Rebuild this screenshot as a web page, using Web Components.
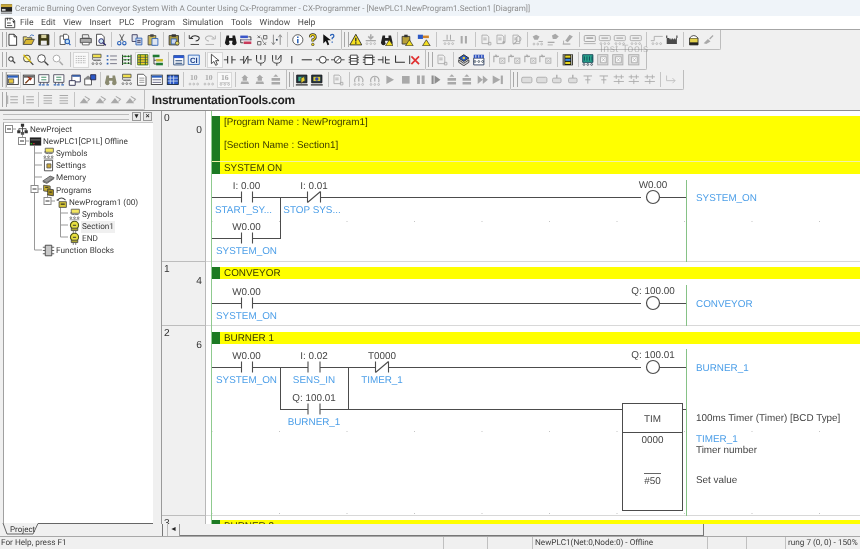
<!DOCTYPE html>
<html><head><meta charset="utf-8"><style>
html,body{margin:0;padding:0;width:860px;height:549px;overflow:hidden;background:#f0f0f0}
app-shell{display:flex;flex-direction:column;width:860px;height:549px;position:relative;filter:blur(.3px);text-rendering:geometricPrecision}
</style></head><body>
<app-shell>
<title-bar>Ceramic Burning Oven Conveyor System With A Counter Using Cx-Programmer - CX-Programmer - [NewPLC1.NewProgram1.Section1 [Diagram]]</title-bar>
<menu-bar items="File,Edit,View,Insert,PLC,Program,Simulation,Tools,Window,Help"></menu-bar>
<tool-row first>
 <tool-bar pad="5.3" end="4.6" items="new open save | cfind | print preview | cut copy paste | ppaste | undo redo | binoc repl gears arrows | info q helpq"></tool-bar>
 <tool-bar pad="6.3" end="4" items="warn gman binw |4.8 lockw +2 colw |9 grung gbars |6.2 gdoc gdocm gdocq |5.8 gp1 gp2 gp3 |5.8 gchip gchipd gchipd gchipd |5.4 gstep gfact |6.2 lock gplug"></tool-bar>
</tool-row>
<tool-row>
 <tool-bar pad="4.3" end="2" items="mag magx magp magg |7.4 grid* symb list io table* tree |5.6 chart ci |5.2 arrow* no nc onc onc2 vert hline coil coiln fb fb2 tee ell xred"></tool-bar>
 <tool-bar pad="8.3" end="5" items="gdoc |6.6 bchip bio |5.2 gsq gsq gsq gsq |6.4 film |4.6 teal gbox gbox gbox"></tool-bar>
</tool-row>
<tool-row>
 <tool-bar pad="5.3" end="3" items="win* ham ldg ldg win2 home |5.6 binocs symb doc2 win3 win4 |6 n10 n10 n16* |4.8 garrow garrow gstack"></tool-bar>
 <tool-bar pad="6.3" end="5" items="online online2 |6.2 gdoc |5.6 gcirc gcirc play stop pause stepb gstack gstack fwd endb"></tool-bar>
 <tool-bar pad="7.3" end="4.6" items="gpill gpill gpin gpin gt gt gtt gtt gtt |5.4 gret"></tool-bar>
</tool-row>
<tool-row last>
 <tool-bar pad="5.3" end="5" items="gind gind |4.2 glist glist |6.2 gkey gkey gkey gkey"></tool-bar>
 <brand-text>InstrumentationTools.com</brand-text>
</tool-row>
<water-mark>Inst Tools</water-mark>
<work-area>
 <project-pane slot="side"></project-pane>
 <ladder-view slot="main">
  <l-rung no="0" step="0" top="111" h="151" dots="28">
   <l-band y="116" h="58" split="161"><l-note y="123">[Program Name : NewProgram1]</l-note><l-note y="146">[Section Name : Section1]</l-note><l-note y="168.500">SYSTEM ON</l-note></l-band>
   <l-wire x1="212" y1="197" x2="641" y2="197"></l-wire><l-wire x1="212" y1="238" x2="280" y2="238"></l-wire><l-wire x1="280" y1="197" x2="280" y2="238"></l-wire><l-wire x1="660" y1="197" x2="686" y2="197"></l-wire>
   <l-wire x1="686" y1="180" x2="686" y2="261" green></l-wire>
   <l-contact cx="246.5" y="197" nx="-3" addr="I: 0.00" name="START_SY..."></l-contact>
   <l-contact cx="314" y="197" nc nx="-2" addr="I: 0.01" name="STOP SYS..."></l-contact>
   <l-contact cx="246.5" y="238" addr="W0.00" name="SYSTEM_ON"></l-contact>
   <l-coil cx="653" y="197" addr="W0.00" name="SYSTEM_ON"></l-coil>
  </l-rung>
  <l-rung no="1" step="4" top="262" h="64" dots="23">
   <l-band y="267" h="12"><l-note y="274">CONVEYOR</l-note></l-band>
   <l-wire x1="212" y1="303" x2="641" y2="303"></l-wire><l-wire x1="660" y1="303" x2="686" y2="303"></l-wire>
   <l-wire x1="686" y1="285" x2="686" y2="325" green></l-wire>
   <l-contact cx="246.5" y="303" addr="W0.00" name="SYSTEM_ON"></l-contact>
   <l-coil cx="653" y="303" addr="Q: 100.00" name="CONVEYOR"></l-coil>
  </l-rung>
  <l-rung no="2" step="6" top="326" h="190" dots="23">
   <l-band y="332" h="12"><l-note y="339">BURNER 1</l-note></l-band>
   <l-wire x1="212" y1="367" x2="641" y2="367"></l-wire><l-wire x1="660" y1="367" x2="686" y2="367"></l-wire>
   <l-wire x1="280" y1="367" x2="280" y2="409"></l-wire><l-wire x1="348" y1="367" x2="348" y2="409"></l-wire><l-wire x1="280" y1="409" x2="622" y2="409"></l-wire><l-wire x1="682" y1="409" x2="686" y2="409"></l-wire>
   <l-wire x1="686" y1="349" x2="686" y2="515" green></l-wire>
   <l-contact cx="246.5" y="367" addr="W0.00" name="SYSTEM_ON"></l-contact>
   <l-contact cx="314" y="367" addr="I: 0.02" name="SENS_IN"></l-contact>
   <l-contact cx="382" y="367" nc addr="T0000" name="TIMER_1"></l-contact>
   <l-contact cx="314" y="409" addr="Q: 100.01" name="BURNER_1"></l-contact>
   <l-coil cx="653" y="367" addr="Q: 100.01" name="BURNER_1"></l-coil>
   <l-timer x="622" y="403" w="61" h="108" op="TIM" num="0000" set="#50"></l-timer>
   <l-text x="696" y="419">100ms Timer (Timer) [BCD Type]</l-text>
   <l-text x="696" y="440" blue>TIMER_1</l-text>
   <l-text x="696" y="451">Timer number</l-text>
   <l-text x="696" y="481">Set value</l-text>
  </l-rung>
  <l-rung no="3" step="" top="516" h="30" dots="23">
   <l-band y="520" h="12"><l-note y="526.500">BURNER 2</l-note></l-band>
  </l-rung>
  <h-scroll></h-scroll>
 </ladder-view>
</work-area>
<status-bar></status-bar>
</app-shell>
<script>
const G='#a9a9a9',K='#2e2e2e',B='#2a62b8';
const ln=(d,c=K,w=1)=>`<path d="${d}" fill="none" stroke="${c}" stroke-width="${w}"/>`;
const fl=(d,f,c='none')=>`<path d="${d}" fill="${f}" stroke="${c}"/>`;
const ooo=(c,y=14)=>[3.5,8,12.5].map(x=>`<circle cx="${x}" cy="${y}" r="1.1" fill="none" stroke="${c}" stroke-width=".8"/>`).join('');
const tri=`<path d="M8 1.5L15 14H1z" fill="#f5e020" stroke="#222"/>`+ln('M8 5.5v4.5',K,1.6)+ln('M8 11v1.6',K,1.6);
const miniw=`<path d="M11 8l4.5 7h-9z" fill="#f5e020" stroke="#222" stroke-width=".8"/>`;
const binoc=c=>fl('M3 3h3v3h4V3h3l2 9h-5V9H6v3H1z',c)+`<circle cx="4" cy="12" r="2.4" fill="${c}"/><circle cx="12" cy="12" r="2.4" fill="${c}"/>`;
const ldoc=(c=G)=>fl('M3.5 2.5h6l2 2v8h-8z','none',c)+ln('M5 6h4M5 8h4',c);
const win=(t,f='#fff')=>`<rect x="1.5" y="2.5" width="13" height="11" fill="${f}" stroke="#333"/><rect x="2" y="3" width="12" height="2.5" fill="${t}"/>`;
const I={
new:fl('M3.5 1.5h6l3 3v10h-9z','#fff','#222')+ln('M9.5 1.5v3h3','#222'),
open:fl('M1.5 13.5V4.5h4l1 1h5v2','#ecd868','#444')+fl('M1.5 13.5l3-6h10l-3 6z','#d9b732','#444')+ln('M9 4q2-3 5-1',B),
save:fl('M2 2h12v12H2z','#3d3a12','#222')+fl('M5 2h6v4H5z','#d8d2a0')+fl('M4.5 9h7v5h-7z','#eee'),
cfind:fl('M2.5 3.5h4l2 2v8h-6z','#fff','#444')+fl('M6.5 1.5h4l2 2v4h-6z','#fff','#444')+`<circle cx="11" cy="10" r="2.6" fill="#bfe0f7" stroke="${B}" stroke-width="1.2"/>`+ln('M12.6 12l2 2.4',B,1.4),
print:fl('M4 2h7l1 4H4z','#eee','#555')+fl('M1.5 6.5h13v5h-13z','#aaa','#444')+fl('M4 11h8v3H4z','#fff','#555'),
preview:fl('M3 1.5h6l3 3v10H3z','#fff','#333')+`<circle cx="8.5" cy="9.5" r="2.8" fill="#cfe8f5" stroke="#226" stroke-width="1.1"/>`+ln('M10.5 11.5l3.5 3','#226',1.4),
cut:ln('M5.5 1.5l4 8M10.5 1.5l-4 8','#444',1)+`<circle cx="5" cy="12" r="2" fill="none" stroke="${B}" stroke-width="1.3"/><circle cx="11" cy="12" r="2" fill="none" stroke="${B}" stroke-width="1.3"/>`,
copy:fl('M2.5 2h6v8h-6z','#dfe3ee','#335')+fl('M7 6h7v8H7z','#c2cde2',B)+ln('M8.5 9h4M8.5 11h4','#335'),
paste:fl('M2.5 3h9v11h-9z','#c9b65a','#444')+fl('M5 1.5h4v3H5z','#444')+fl('M7 6.5h7v8H7z','#dfe6f2',B),
ppaste:fl('M2.5 3h11v11h-11z','#a7963f','#333')+fl('M5.5 1.5h5v3h-5z','#333')+fl('M5 7h6v6H5z','#c9d6ee',B)+`<circle cx="12" cy="12" r="2.2" fill="#e3d860" stroke="#333" stroke-width=".8"/>`,
undo:ln('M3 6q3-3.500 7-2.500t3 3.500q-1 2.500-4 2.500',K,1.200)+ln('M1.500 2.500v4h4.500',K,1.100)+ln('M3 13.500h10',K,1),
redo:ln('M13 6q-3-3.500-7-2.500t-3 3.500q1 2.500 4 2.500',G,1.100)+ln('M14.500 3v4H10',G,1)+ln('M3 13.500h10',G,1),
binoc:binoc('#1b1b1b'),
binocs:binoc('#8a8a70'),
repl:fl('M1.500 3h9v3h-9z','#3a56c8')+fl('M5.500 10h9v3h-9z','#c83a5a')+ln('M11 4.500h3v4M5 11.500H2v-4',K,1)+ln('M1.500 8h13','#336',.8),
gears:ln('M3 3l3 3m-3 0l3-3M10 3h4v4h-4zM3 10h4v4H3zM10 11l3 3m-3 0l3-3',"#666",1.100)+ln('M7 5l3 6','#888',1),
arrows:ln('M4 2v11M2 11l2 3 2-3M12 14V3M10 5l2-3 2 3',"#888",1.100)+ln('M7 8h2','#345',2),
info:`<circle cx="8" cy="8" r="6" fill="#fff" stroke="#444"/>`+ln('M8 7v5',B,1.800)+ln('M8 4v1.800',B,1.800),
q:ln('M5 5q0-3 3-3t3 3q0 2-3 3v2',K,3.200)+ln('M5 5q0-3 3-3t3 3q0 2-3 3v2','#f2d820',1.500)+`<circle cx="8" cy="13.500" r="1.500" fill="#f2d820" stroke="#222" stroke-width=".7"/>`,
helpq:fl('M1.500 1.500v11l3-3 2 5 2-1-2-5h4z','#111')+ln('M10 3.500q0-2 2-2t2 2q0 1.500-2 2.500v1.500',B,1.500)+ln('M12 10v1.500',B,1.500),
warn:tri,
gman:ln('M8 1.500v5M5 4l3 3 3-3',G,1.800)+ln('M2 9h12',G,1.500)+ooo(G,12.5),
binw:binoc('#222')+miniw,
lockw:fl('M2.500 4h9v9h-9z','#b79f38','#333')+fl('M5 2h4v3H5z','#333')+miniw,
colw:fl('M1 2h6v5H1z','#2d58c4')+fl('M7 3h7v3H7z','#d08428')+miniw,
grung:ln('M6 2v6M10 2v6',G,1.200)+ln('M1 9h14',G)+ooo(G,12.5),
gbars:ln('M5.500 3.500v9M10.500 3.500v9',G,2.400),
gdoc:ldoc()+ln('M11 11h3v3h-3z',G),
gdocm:ldoc()+ln('M13 2v9',G)+`<circle cx="11.500" cy="11" r="1.500" fill="${G}"/>`,
gdocq:ldoc()+`<circle cx="10" cy="7" r="3" fill="none" stroke="${G}"/>`+ln('M8 9.500l-4 4',G,1.300),
gp1:fl('M2 4l4-2 4 2-2 4H4z',G)+ln('M9 10h5',G)+ooo(G,13),
gp2:fl('M7 3l4-2 4 3-3 3H8z',G)+ln('M2 11h8',G,1.500)+ln('M2 14h6',G),
gp3:fl('M10 2l4 2-6 7-3-2z',G)+ln('M2 13h9',G,1.400)+ln('M3 9v4',G),
gchip:`<rect x="1.500" y="3" width="13" height="7" rx="1" fill="none" stroke="#9c9c9c"/>`+ln('M4 6h8',G,2)+ln('M1 12.500h14',G),
gchipd:`<rect x="1.500" y="3" width="13" height="6" rx="1" fill="none" stroke="${G}"/>`+ln('M4 6h8',G,1.500)+ooo(G,12.500),
gstep:ln('M1 9h4V4h10',G,1)+ooo(G,12.500),
gfact:fl('M2 6v7h12V6h-1l-1 2-1-2-1 2-1-2-1 2-1-2-1 2-1-2z','#4a4a4a')+ln('M2 3v3M14 3v3','#555',1.500),
lock:fl('M3 6h10v8H3z','#e2d04c','#333')+fl('M3 6q5-6 10 0','#fff','#333')+fl('M3 11h10v3H3z','#222'),
gplug:fl('M2 12l5-5 3 3-5 3z',G)+ln('M9 7l4-4',G,1.500),
mag:`<circle cx="7" cy="7" r="2.600" fill="#fff" stroke="#444" stroke-width="1.200"/>`+ln('M9 9l3 3','#444',1.500),
magx:`<circle cx="7" cy="6.500" r="4" fill="#fff9c0" stroke="#444" stroke-width="1.100"/>`+ln('M10 9.500l4.500 4.500','#444',1.500)+ln('M3 2l9 9',"#d7b800",1.500),
magp:`<circle cx="6.500" cy="6.500" r="4.500" fill="#fff" stroke="#444" stroke-width="1.100"/>`+ln('M10 10l4.500 4.500','#444',1.600),
magg:`<circle cx="6.500" cy="6.500" r="4" fill="#fff" stroke="${G}" stroke-width="1.100"/>`+ln('M10 10l4 4',G,1.700),
grid:ln('M2 4h12M2 6.500h12M2 9h12M2 11.500h12','#999',.8)+ln('M4 3v10M7 3v10M10 3v10M13 3v10','#f9f9f9',1),
symb:fl('M3 1.500h10v4H3z','#f0e050','#555')+ln('M3 5.500q-2 5 10 3','#666')+ooo('#555',12.500)+ln('M4 8h8','#666',.7),
list:ln('M6 3.500h8M6 8h8M6 12.500h8','#667',1)+ln('M2 3.500h2M2 8h2M2 12.500h2',B,1.800),
io:ln('M3 2v12M13 2v12',K,1.200)+ln('M3 4h10M3 8h10M3 12h10','#4a4',1.300)+ln('M6 3v2M10 3v2M6 7v2M10 7v2M6 11v2M10 11v2',K,1.200),
table:fl('M2 2h12v12H2z','#f0d820','#2a6020')+ln('M2 5h12M2 8h12M2 11h12','#446',.9)+ln('M5 2v12M11 2v12','#2a6020',1.100),
tree:fl('M2 2h8v3H2z','#1f7a32')+fl('M6 7h8v3H6z','#c8b828')+fl('M6 11.500h8v3H6z','#1f7a32')+ln('M3.500 5v8h2.500M3.500 8.500h2.500','#333'),
chart:fl('M2 3h12v11H2z','#fff','#247')+fl('M2 3h12v3H2z','#2b58d0')+ln('M4 9h8M4 12h8','#247',1.200),
ci:fl('M1.500 2.500h13v11h-13z','#e2eefc',B)+`<text x="8" y="11.500" text-anchor="middle" font-family="Liberation Sans" font-weight="700" font-size="9" fill="#1a3b86">CI</text>`,
arrow:fl('M4 1.500v11l3-2.500 2 4.500 2-1-2-4.500h4z','#fff','#333'),
no:ln('M1 8h4.500M10.500 8H15',K)+ln('M5.500 3.500v9M10.500 3.500v9',K,1.200),
nc:ln('M1 8h4.500M10.500 8H15',K)+ln('M5.500 3.500v9M10.500 3.500L5.500 12.500M10.500 3.500v9',K,1.100),
onc:ln('M3 2.500v5.500M8 2.500v5.500M13 2.500v5.500',K,1.200)+ln('M3 8q0 4 5 4t5-4M8 12v3',K,1),
onc2:ln('M3 2.500v5.500M7 2.500v5.500M13 2.500L9 8M13 2.500v5.500',K,1.100)+ln('M3 8q0 4 5 4t5-4M8 12v3',K,1),
vert:ln('M8 3.500v9',K,1.200),
hline:ln('M2 8h12',K,1.200),
coil:ln('M0 8h4M12 8h4',K)+`<circle cx="8" cy="8" r="4" fill="#fff" stroke="${K}" stroke-width="1.100"/>`,
coiln:ln('M0 8h4M12 8h4',K)+`<circle cx="8" cy="8" r="4" fill="#fff" stroke="${K}" stroke-width="1.100"/>`+ln('M5 11l6-6',K),
fb:fl('M4 2.500h8v11H4z','#fff',K)+ln('M2 5h2M12 5h2M2 8h2M12 8h2M2 11h2M12 11h2M4 6.500h8M4 9.500h8',K),
fb2:fl('M3.500 2.500h9v11h-9z','#fff',K)+ln('M1 5h2.500M12.500 5H15M1 8h2.500M12.500 8H15M1 11h2.500M12.500 11H15',K)+ln('M3.500 5.500h9',K,1.500),
tee:ln('M1 8h6M7 4v8M10 4v8M10 8h5M10 12h5',K,1.100),
ell:ln('M3 3v8h11',K,1.200),
xred:ln('M2 3v10',K,1.100)+ln('M4 4l9 9M13 4l-9 9','#e03030',2),
bchip:fl('M2 6l6-4 6 4-6 4z','#2a58c0','#222')+fl('M2 8l6 4 6-4v3l-6 4-6-4z','#cfcfcf','#333')+`<circle cx="8" cy="6" r="1.500" fill="#e8d040"/>`,
bio:fl('M2 6h12v8H2z','#fff','#235')+fl('M2 2h12v4H2z','#2b4fbc')+ln('M4.500 2.500v3M8 2.500v3M11.500 2.500v3','#fff',1)+ooo('#234',10),
gsq:ln('M1 11V4h6',G,1.300)+`<rect x="8" y="6" width="6" height="6" fill="#eee" stroke="${G}"/>`+ln('M9.500 7.500l3 3M12.500 7.500l-3 3',G,.8)+ln('M3 2l2 3',G,1.500),
film:fl('M2 1.500h12v13H2z','#1b1b10')+fl('M5 3h6v2.500H5z','#e8d820')+fl('M5 6.800h6v2.500H5z','#3a8ae0')+fl('M5 10.500h6v2.500H5z','#e8d820')+ln('M3.500 2v12M12.500 2v12','#eee',.9),
teal:fl('M2 2h12v9H2z','#29a58e','#0b3a4c')+ln('M4 4v5M7 4v5M10 4v5M13 4v5','#0b3a4c',.9)+ooo('#234',13.500),
gbox:`<rect x="2" y="2" width="12" height="12" fill="#ddd" stroke="#aaa"/>`+`<rect x="5.500" y="4.500" width="6.500" height="7" fill="#fff" stroke="${G}"/>`+ln('M7 6l3.500 4M10.500 6L7 10',G,.8),
win:win('#2a60c0')+fl('M3 7h6v5H3z','#e8c840','#555'),
ham:win('#666')+ln('M4 12L10 6',"#7a3a10",1.500)+fl('M6 4l6 2-2 3z','#a83018'),
ldg:fl('M2 2h12v9H2z','#fff','#445')+ln('M5 5h6M5 8h6','#3a8a60',1.100)+ln('M2 14h3M6 14h3M11 14h3',B,1.400)+ln('M4 11v2M8 11v2M12 11v2','#445'),
win2:fl('M4.500 2.500h10v8h-10z','#fff','#224')+fl('M1.500 9h7v5.500h-7z','#fff','#224')+ln('M5 3.500h9','#2350a0',1.800),
home:fl('M2 7h8v7H2z','#fff','#444')+fl('M1 7l5-4 5 4z','#888')+fl('M9 2h6v6H9z','#2b58c8','#224'),
doc2:fl('M3 1.500h7l3 3v10H3z','#fff','#444')+ln('M5 6h6M5 8.500h6M5 11h6','#888'),
win3:win('#2a60c0')+ln('M3 8h10','#557',1)+ln('M3 11h10','#557',1),
win4:`<rect x="1.500" y="2.500" width="13" height="11" fill="#2b58c8" stroke="#123"/>`+ln('M5 3v10M9 3v10M2 6h12M2 9.500h12','#cde',1),
n10:`<text x="8" y="8.500" text-anchor="middle" font-family="Liberation Serif" font-size="9" fill="#aaa">10</text>`+ooo(G,13),
n16:`<text x="8" y="8.500" text-anchor="middle" font-family="Liberation Serif" font-size="9" fill="#aaa">16</text>`+ln('M2 11.500h12',G,.8)+ooo(G,13.500),
garrow:fl('M8 2l4 4h-1.500v3h-5V6H4z',G)+fl('M4 10h8l1 3H3z',G),
gstack:fl('M8 1.500l3 3H5z',G)+fl('M3 6h10v3H3zM3 10.500h10v3H3z',G),
online:fl('M2 2.500h12v9H2z','#234','#111')+fl('M4 4.500h8v5H4z','#3eb08a')+fl('M7 6l4-2 1 5-5 3z','#e8d030','#333')+ln('M1 14h14','#222',1.400),
online2:fl('M2 2.500h12v9H2z','#234','#111')+fl('M4 4.500h8v5H4z','#d8c838')+`<circle cx="8" cy="7" r="2" fill="#34a"/>`+ln('M1 14h14','#222',1.400),
gcirc:ln('M3.500 11a5 5 0 1 1 9 0',G,1.400)+ln('M8 5v5',G,1.400)+ooo(G,13.500),
play:fl('M4 3l9 5-9 5z',G),
stop:fl('M3.500 3.500h9v9h-9z',G),
pause:fl('M3.500 3h3.500v10H3.500zM9 3h3.500v10H9z',G),
stepb:fl('M3 3h2.500v10H3zM6.500 3l7 5-7 5z','#8e8e8e'),
fwd:fl('M2 3l6 5-6 5zM8 3l6 5-6 5z',G),
endb:fl('M2 3l9 5-9 5z',G)+fl('M11.500 3h2.500v10h-2.500z',G),
gpill:`<rect x="2" y="5" width="12" height="6.500" rx="1.500" fill="#ddd" stroke="${G}"/>`,
gpin:`<rect x="3" y="6" width="10" height="5.500" rx="1.500" fill="#ddd" stroke="${G}"/>`+ln('M8 2v4',G,1.500),
gt:ln('M3 3.500h10M8 3.500v9M5 8h6',G,1.100),
gtt:ln('M2 4.500h12M5 2v5M11 2v5M2 10h12M8 7v6',G,1),
gret:ln('M3 3v6h10M10 6l3 3-3 3',"#c0c0c0",1.100),
gind:ln('M2 3v10M5 4.500h9M5 8h9M5 11.500h9',G,1.200),
glist:ln('M3 3h10M3 6h10M3 9h10M3 12h10',G,1.200),
gkey:fl('M2 12l5-6 5 6z',G)+ln('M8 4l5 3M11 10l3-3',G,1.200)
};
function shadow(el,html){const r=el.attachShadow({mode:'open'});r.innerHTML=html;return r}
const def=(n,c)=>customElements.define(n,c);
def('app-shell',class extends HTMLElement{});
const UI='Roboto,"Noto Sans",sans-serif';
const AR='"Liberation Sans",Arial,sans-serif';
const WIRE='#4c4c4c';
def('title-bar',class extends HTMLElement{constructor(){super();shadow(this,`<style>:host{display:flex;align-items:center;height:16px;background:#eff4f9;color:#8d8d8d;font:8.100px/17px ${UI};white-space:nowrap;flex:none;gap:2px}svg{width:13px;height:14px;flex:none}</style><svg viewBox="0 0 14 14">${fl('M1 3h12v8H1z','#222')+fl('M1 3h12v3H1z','#c9a83a')+fl('M2 8h4v2H2z','#d9d9d9')+ln('M1 12.500h12','#555')}</svg><slot></slot>`)}});
def('menu-bar',class extends HTMLElement{connectedCallback(){if(this.shadowRoot)return;const it=this.getAttribute('items').split(',');shadow(this,`<style>:host{display:flex;align-items:center;height:13px;background:#fff;color:#4a4a4a;font:8.600px/14px ${UI};flex:none;padding-left:4px}svg{width:12px;height:12px;margin-right:4px}span{margin-right:7.600px}</style><svg viewBox="0 0 14 14">${fl('M1.500 1.500h8l3 3v8h-11z','#fff','#333')+ln('M4 1v3M7 1v3M3.500 7h4.500M3.500 10h6','#333')+fl('M9.500 4.500l3 0-1 3z','#333')}</svg>`+it.map(t=>`<span>${t}</span>`).join(''))}});
def('tool-row',class extends HTMLElement{constructor(){super();shadow(this,`<style>:host{display:flex;height:20px;flex:none;background:#f0f0f0;align-items:stretch;box-sizing:border-box}:host([first]){border-top:1px solid #a6a6a6;height:21px}:host([last]){border-bottom:1px solid #8e8e8e;height:21px}</style><slot></slot>`)}});
def('tool-bar',class extends HTMLElement{connectedCallback(){if(this.shadowRoot)return;
 const pad=this.getAttribute('pad'),end=this.getAttribute('end');
 const html=this.getAttribute('items').split(/\s+/).map(t=>{
  if(t[0]=='|')return `<i class="sep" style="width:${t.slice(1)||5.5}px"></i>`;
  if(t[0]=='+')return `<i style="width:${t.slice(1)}px"></i>`;
  const on=t.endsWith('*');const n=on?t.slice(0,-1):t;
  return `<b class="${on?'on':''}"><svg viewBox="0 0 16 16">${I[n]||''}</svg></b>`}).join('');
 shadow(this,`<style>:host{display:flex;align-items:center;box-sizing:border-box;padding:0 ${end}px 0 ${pad}px;position:relative;border-right:1px solid #bdbdbd;border-bottom:1px solid #bdbdbd;border-radius:0 0 2px 0;height:20px}
 .grip{position:absolute;left:2px;top:2px;bottom:2px;width:3px;border-left:1px solid #a8a8a8;border-right:1px solid #a8a8a8}
 b{display:flex;align-items:center;justify-content:center;width:15.400px;height:16px;flex:none}b.on{background:#f9f9f9;box-shadow:inset 0 0 0 1px #d8d8d8}
 svg{display:block;width:13.600px;height:13.600px}
 i{display:block;flex:none;height:15px;position:relative}.sep::after{content:"";position:absolute;left:50%;top:0;bottom:0;width:1px;background:#c4c4c4}</style><span class="grip"></span>${html}`)}});
def('brand-text',class extends HTMLElement{constructor(){super();shadow(this,`<style>:host{display:block;font:700 12px/21px ${AR};color:#222;margin-left:7px;white-space:nowrap;letter-spacing:-.28px}</style><slot></slot>`)}});
def('water-mark',class extends HTMLElement{constructor(){super();shadow(this,`<style>:host{position:absolute;left:600px;top:43px;font:10.500px/12px ${AR};letter-spacing:.45px;color:rgba(120,120,120,.42);white-space:nowrap}</style><slot></slot>`)}});
def('work-area',class extends HTMLElement{constructor(){super();shadow(this,`<style>:host{display:flex;flex:1;min-height:0;background:#f0f0f0}.s{flex:none;width:160px;display:flex}.m{flex:1;min-width:0;display:flex}</style><div class="s"><slot name="side"></slot></div><div class="m"><slot name="main"></slot></div>`)}});
const tree=[[0,'proj','NewProject'],[1,'plc','NewPLC1[CP1L] Offline'],[2,'sym','Symbols'],[2,'set','Settings'],[2,'mem','Memory'],[2,'prg','Programs'],[3,'sub','NewProgram1 (00)'],[4,'sym','Symbols'],[4,'sec','Section1',1],[4,'sec','END'],[2,'fb','Function Blocks']];
const T={
proj:fl('M6 1h4v3.500H6zM1.500 9h4v3.500h-4zM10.500 9h4v3.500h-4z','#333')+ln('M8 4v3M3.500 9V7h9v2M8 7v6','#333')+fl('M6 11h4v3.500H6z','#555'),
plc:fl('M1 3h14v10H1z','#1f1f1f')+fl('M2 5h12v2H2z','#555')+fl('M2 10h2v1.500H2z','#2c2')+fl('M5 10h2v1.500H5z','#d33'),
sym:fl('M4 1.500h10v5H4z','#f4e660','#555')+ln('M4 5q-3 4 9 3','#555')+ooo('#444',12)+ln('M2 14.500h12','#555',.7),
set:fl('M3 1.500h10v13H3z','#fff','#333')+fl('M6 6h5v5H6z','#caa83a','#555'),
mem:fl('M1 11l9-6 5 2-9 6z','#9a9a9a','#555')+ln('M1 12l5 2 9-6','#444'),
prg:fl('M2 1.500l8 1v7l-8-1z','#c8b030','#444')+fl('M7 6l7 1v7.500l-7-1z','#a89020','#333')+ln('M4 4h4M9 10h3','#222',1.200),
sub:ln('M3 5q5-5 10 0','#444',1.300)+fl('M5 7h9v7H5z','#d8c838','#444')+ln('M2 5h3','#444',1.300)+ln('M7 10h5','#222',1.400),
sec:`<circle cx="8" cy="6.500" r="5" fill="#e8e040" stroke="#4a5018" stroke-width="1.400"/>`+fl('M4 10h8v3H4z','#aaa530','#444')+ln('M6.500 14v1.500M9.500 14v1.500M6 6.500h4','#333',1.200),
fb:ln('M1 4h3M1 8h3M1 12h3M12 4h3M12 8h3M12 12h3','#444')+fl('M4 1.500h8v13H4z','#c8c8c8','#333')
};
def('project-pane',class extends HTMLElement{constructor(){super();
 const rows=tree.map(r=>`<div class="row" style="padding-left:${11.500+13*r[0]}px"><svg viewBox="0 0 16 16">${T[r[1]]}</svg><span class="${r[3]?'sel':''}">${r[2]}</span></div>`).join('');
 const bx=(x,y)=>`<rect x="${x-3.500}" y="${y-3.500}" width="7" height="7" fill="#fff" stroke="#8a8a8a"/><path d="M${x-2} ${y}h4" stroke="#333"/>`;
 const lines=`<svg class="ov" viewBox="0 0 150 150"><path d="M19.500 12V19H26M6 7h7M31.500 24V128H39M31.500 31H39M31.500 43H39M31.500 55H39M31.500 67H39M44.500 72V79H52M57.500 84V115H65M57.500 91H65M57.500 103H65" stroke="#999" fill="none"/>${bx(6,7)+bx(19,19)+bx(31.500,67)+bx(44.500,79)}</svg>`;
 shadow(this,`<style>:host{display:flex;flex-direction:column;width:153px;flex:none;font:8.200px/12.100px ${UI};color:#3a3a3a;box-sizing:border-box}
 .head{height:11px;display:flex;align-items:center;justify-content:flex-end;gap:2px;padding:0 1px 0 3px;flex:none}
 .lines{flex:1;height:4px;border-top:1px solid #bbb;border-bottom:1px solid #bbb;margin-right:1px}
 .btn{width:7px;height:7px;border:1px solid #999;background:#e8e8e8;font:700 7px/7px ${AR};text-align:center;color:#222}
 .panel{flex:1;background:#fff;margin-left:3px;border-left:1px solid #a0a0a0;border-top:1px solid #c8c8c8;position:relative;min-height:0;padding-top:.6px}
 .row{display:flex;align-items:center;height:12.100px;white-space:nowrap;position:relative}
 .row svg{width:13px;height:13px;margin-right:1.500px;flex:none}
 .row span{position:relative;top:.5px}
 .sel{background:#f0f0f0;padding:0 1px;margin-left:-1px}
 .ov{position:absolute;left:-1px;top:-1px;width:150px;height:150px;overflow:visible}
 .tabs{height:12px;flex:none;position:relative;margin-left:0}
 .tabs svg{position:absolute;left:0;top:-1px;width:153px;height:13px}
 .tab{position:absolute;left:10px;top:1px;font:8px/10px ${UI};color:#333}</style>
 <div class="head"><div class="lines"></div><div class="btn">▾</div><div class="btn">×</div></div>
 <div class="panel">${lines}${rows}</div><div class="tabs"><svg viewBox="0 0 153 13"><path d="M3 0L7 11H33L38 .5H153" fill="#f0f0f0" stroke="#666"/></svg><div class="tab">Project</div></div>`)}});
def('ladder-view',class extends HTMLElement{constructor(){super();shadow(this,`<style>:host{display:block;flex:1;min-width:0;position:relative;overflow:hidden;height:425px}.v{height:413px;overflow:hidden;background:#fff;border-left:1px solid #9a9a9a;margin-left:1px}</style><div class="v"><slot></slot></div><slot name="x"></slot>`)}});
def('l-rung',class extends HTMLElement{constructor(){super();
 const h=this.getAttribute('h');
 shadow(this,`<style>:host{display:flex;height:${h}px;box-sizing:border-box;border-bottom:1px solid #d8d8d8}
 .n{width:44px;flex:none;background:#f0f0f0;border-right:1px solid #b8b8b8;border-bottom:1px solid #bdbdbd;margin-bottom:-1px;font:10.200px/12px ${AR};color:#333;padding:1.500px 3px 0 2px;box-sizing:border-box;position:relative}
 .n div:last-child{text-align:right}
 .c{flex:1;position:relative;background:radial-gradient(circle at .5px .5px,#c4c4c4 .75px,transparent .9px) 5.500px ${this.getAttribute('dots')}px/67.500px 41px #fff}
 .c::before{content:"";position:absolute;left:5px;top:0;bottom:-1px;width:1px;background:#8fca8f}</style>
 <div class="n"><div>${this.getAttribute('no')}</div><div>${this.getAttribute('step')}</div></div><div class="c"><slot></slot></div>`)}});
const O_X=206;
const rt=e=>+e.closest('l-rung').getAttribute('top');
const abs=`:host{display:block;position:absolute;white-space:nowrap;font:9.900px/12px ${AR};color:#333}`;
const BLUE='#4b9ee8';
def('l-band',class extends HTMLElement{connectedCallback(){if(this.shadowRoot)return;const y=+this.getAttribute('y')-rt(this),h=+this.getAttribute('h'),sp=this.getAttribute('split');
 shadow(this,`<style>:host{display:block;position:absolute;left:6px;right:0;top:${y}px;height:${h}px;background:linear-gradient(90deg,#1c7a22 8px,#ff0 8px)}${sp?`.l{position:absolute;left:0;right:0;top:${sp-this.getAttribute('y')}px;height:1px;background:#f2f2a8}`:'.l{display:none}'}</style><div class="l"></div><slot></slot>`)}});
def('l-note',class extends HTMLElement{connectedCallback(){if(this.shadowRoot)return;const b=this.parentElement;const y=+this.getAttribute('y')-(+b.getAttribute('y'));
 shadow(this,`<style>:host{display:block;position:absolute;left:12px;top:${y-6}px;font:9.900px/12px ${AR};color:#3a3a00;white-space:nowrap}</style><slot></slot>`)}});
def('l-wire',class extends HTMLElement{connectedCallback(){if(this.shadowRoot)return;const a=k=>+this.getAttribute(k);const x=Math.min(a('x1'),a('x2'))-O_X,y=Math.min(a('y1'),a('y2'))-rt(this),w=Math.abs(a('x2')-a('x1')),h=Math.abs(a('y2')-a('y1'));const g=this.hasAttribute('green');
 shadow(this,`<style>:host{display:block;position:absolute;left:${x}px;top:${y}px;width:${w||1}px;height:${h?h+1:1}px;background:${g?'#86c286':WIRE}}</style>`)}});
const lbl=(c,t,y,col)=>`<div style="position:absolute;left:${c-60}px;width:120px;top:${y-6}px;text-align:center;color:${col}">${t}</div>`;
def('l-contact',class extends HTMLElement{connectedCallback(){if(this.shadowRoot)return;const cx=+this.getAttribute('cx'),yy=+this.getAttribute('y'),nc=this.hasAttribute('nc');const x=cx-O_X,y=yy-rt(this);const hw=nc?6.500:(cx<300?5.500:6);const nx=+(this.getAttribute('nx')||0);
 shadow(this,`<style>${abs}:host{left:${x}px;top:${y}px;width:0;height:0}svg{position:absolute;left:-10px;top:-7px;width:20px;height:14px;overflow:visible}</style>
 ${lbl(0,this.getAttribute('addr'),-10.500,'#444')}${lbl(nx,this.getAttribute('name'),13.500,BLUE)}
 <svg viewBox="-10 -7 20 14"><rect x="${-hw}" y="-3" width="${2*hw}" height="6" fill="#fff"/><path d="M${-hw} -5.500v11M${hw} -5.500v11${nc?`M${hw} -5.500L${-hw} 5.500`:''}" stroke="${WIRE}" fill="none" stroke-width="1.100"/></svg>`)}});
def('l-coil',class extends HTMLElement{connectedCallback(){if(this.shadowRoot)return;const x=+this.getAttribute('cx')-O_X,y=+this.getAttribute('y')-rt(this);
 shadow(this,`<style>${abs}:host{left:${x}px;top:${y}px;width:0;height:0}svg{position:absolute;left:-8px;top:-8px;width:16px;height:16px}</style>
 ${lbl(0,this.getAttribute('addr'),-11,'#444')}<div style="position:absolute;left:43px;top:-4.500px;color:${BLUE}">${this.getAttribute('name')}</div>
 <svg viewBox="-8 -8 16 16"><circle r="6.500" fill="#fff" stroke="${WIRE}" stroke-width="1.200"/></svg>`)}});
def('l-text',class extends HTMLElement{connectedCallback(){if(this.shadowRoot)return;const x=+this.getAttribute('x')-O_X,y=+this.getAttribute('y')-rt(this);
 shadow(this,`<style>${abs}:host{left:${x}px;top:${y-6}px;color:${this.hasAttribute('blue')?BLUE:'#444'}}</style><slot></slot>`)}});
def('l-timer',class extends HTMLElement{connectedCallback(){if(this.shadowRoot)return;const g=k=>this.getAttribute(k);const x=+g('x')-O_X,y=+g('y')-rt(this);
 shadow(this,`<style>${abs}:host{left:${x}px;top:${y}px;width:${g('w')}px;height:${g('h')}px;box-sizing:border-box;border:1px solid ${WIRE};background:#fff;color:#444;text-align:center}
 div{position:absolute;left:0;right:0}.d{top:28px;height:1px;background:${WIRE}}.o{left:21px;right:21px;top:69px;height:1px;background:#666}</style>
 <div style="top:9.500px">${g('op')}</div><div class="d"></div><div style="top:30.500px">${g('num')}</div><div class="o"></div><div style="top:71.500px">${g('set')}</div>`)}});
def('h-scroll',class extends HTMLElement{constructor(){super();shadow(this,`<style>:host{position:absolute;left:0;right:0;top:413px;height:12px;display:flex;background:#f0f0f0;z-index:3}
 .g{width:4px;border-left:1px solid #777;border-right:1px solid #bbb;flex:none;margin-left:2px}.a{width:11px;border-right:1px solid #999;font:7px/12px ${AR};text-align:center;color:#222;flex:none}.t{width:523.500px;border-right:1px solid #777;border-bottom:1px solid #777;flex:none;box-sizing:border-box}</style><div class="g"></div><div class="a">◄</div><div class="t"></div>`)}
 connectedCallback(){this.slot='x'}});
def('status-bar',class extends HTMLElement{constructor(){super();shadow(this,`<style>:host{display:flex;height:13px;flex:none;background:#f0f0f0;border-top:1px solid #a8a8a8;box-sizing:border-box;font:8.200px/13px ${UI};color:#3c3c3c;white-space:nowrap}
 div{box-sizing:border-box;border-left:1px solid #c0c0c0;flex:none;padding-left:2px}.f{border:0;flex:1;padding-left:1px}</style>
 <div class="f">For Help, press F1</div><div style="width:44px"></div><div style="width:45px"></div><div style="width:175px">NewPLC1(Net:0,Node:0) - Offline</div><div style="width:39px"></div><div style="width:39px"></div><div style="width:75px">rung 7 (0, 0) - 150%</div>`)}});
</script>
</body></html>
